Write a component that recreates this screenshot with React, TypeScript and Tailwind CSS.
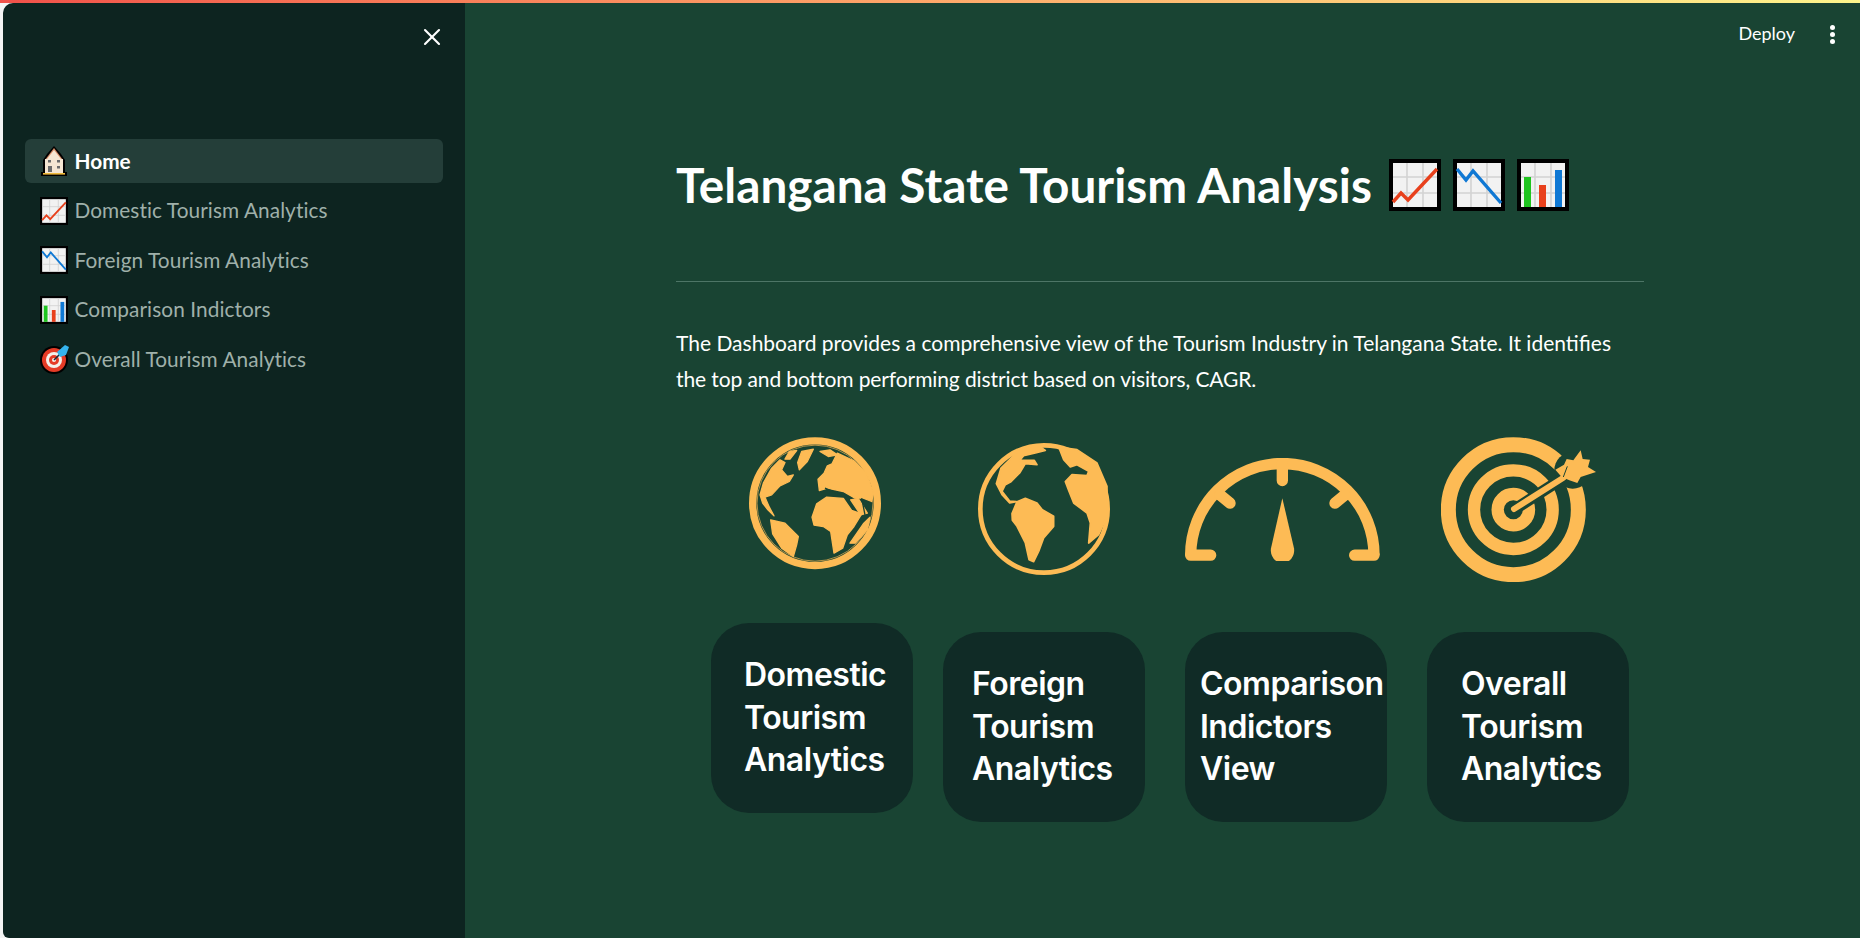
import { X } from 'lucide-react';

const GOLD = '#fdbb55';
const GREEN = '#194433';

function ChartBox({ kind, box }: { kind: 'up' | 'down' | 'bars'; box: string }) {
  return (
    <svg viewBox="0 0 52 52" className={box}>
      <rect width="52" height="52" fill="#000" />
      <rect x="4" y="4" width="44" height="44" fill="#f2f2f2" />
      <path d="M4 18H48M4 34H48M18 4V48M34 4V48" stroke="#d2d2d2" strokeWidth="1.6" fill="none" />
      {kind === 'up' && <path d="M4 43 L12 34 L19 41 L48 10" stroke="#e8401c" strokeWidth="3.4" fill="none" />}
      {kind === 'down' && <path d="M4 10 L13 21 L20 12 L48 44" stroke="#0f78d4" strokeWidth="3.4" fill="none" />}
      {kind === 'bars' && (
        <>
          <rect x="7" y="18" width="7" height="30" fill="#1fc41f" />
          <rect x="22" y="26" width="7" height="22" fill="#e8401c" />
          <rect x="38" y="11" width="7" height="37" fill="#0f78d4" />
        </>
      )}
    </svg>
  );
}

function HouseEmoji() {
  return (
    <svg viewBox="0 0 28 30" className="w-7 h-[30px] shrink-0">
      <path d="M14 0 L21 8 L25 14 V26 H27 V30 H1 V26 H3 V14 L7 8 Z" fill="#000" />
      <path d="M14 2 L23 14 H5 Z" fill="#d98f6a" />
      <rect x="5" y="13" width="18" height="14" fill="#f5e6d3" />
      <path d="M14 4 L21 13 H7 Z" fill="#f5e6d3" />
      <rect x="8" y="14" width="3" height="2.5" fill="#6b6b6b" />
      <rect x="17" y="14" width="3" height="2.5" fill="#6b6b6b" />
      <rect x="8" y="20" width="4" height="6" fill="#6b6b6b" />
      <rect x="17" y="20" width="3" height="2.5" fill="#6b6b6b" />
      <rect x="3" y="27" width="22" height="1.6" fill="#f0b93a" />
    </svg>
  );
}

function TargetEmoji() {
  return (
    <svg viewBox="0 0 30 30" className="w-[30px] h-[30px] shrink-0 -mr-[2px]">
      <circle cx="14" cy="16" r="14" fill="#000" />
      <circle cx="14" cy="16" r="12" fill="#e53b26" />
      <circle cx="14" cy="16" r="8" fill="#f4f0ea" />
      <circle cx="14" cy="16" r="5" fill="#e53b26" />
      <circle cx="14" cy="16" r="2" fill="#f4f0ea" />
      <path d="M14 16 L22 8" stroke="#1b2a3a" strokeWidth="1.6" />
      <path d="M17 8 L25 1 L29 3 L26 11 L20 13 Z" fill="#35b4ee" />
    </svg>
  );
}

function GlobeAtlantic() {
  return (
    <svg viewBox="57 52 396 398" className="w-[132px] h-[133px]">
      <circle cx="255" cy="250" r="187" fill="none" stroke={GOLD} strokeWidth="22" />
      <circle cx="255" cy="250" r="174" fill="none" stroke={GOLD} strokeWidth="2" />
      <g fill={GOLD} stroke={GOLD} strokeWidth="4" strokeLinejoin="round">
        <path d="M90 225 L100 190 L125 145 L150 120 L165 128 L155 150 L172 170 L190 165 L178 185 L150 198 L125 225 L105 232 L118 262 L132 288 L112 268 L98 250 Z" />
        <path d="M178 95 L200 92 L180 118 L165 118 Z" />
        <path d="M215 95 L250 88 L232 125 L208 150 L203 128 Z" />
        <path d="M122 300 L165 310 L205 350 L200 375 L190 410 L155 385 L128 342 Z" />
        <path d="M322 100 L370 122 L410 160 L430 220 L425 245 L400 235 L375 235 L340 215 L292 205 L268 212 L264 178 L282 160 L292 138 L306 132 Z" />
        <path d="M270 95 L300 90 L322 105 L295 110 Z" />
        <path d="M246 292 L260 252 L290 232 L340 236 L365 272 L395 282 L372 320 L352 345 L338 385 L312 400 L302 335 L280 320 L252 316 Z" />
        <path d="M360 370 L400 312 L420 292 L412 330 L376 370 Z" />
        <path d="M362 240 L385 236 L412 280 L392 285 Z" />
      </g>
      <path d="M395 235 L405 285 M285 205 L340 228" stroke={GREEN} strokeWidth="4" />
    </svg>
  );
}

function GlobeAmericas() {
  return (
    <svg viewBox="743 70 396 396" className="w-[132px] h-[132px]">
      <circle cx="941" cy="268" r="191" fill="none" stroke={GOLD} strokeWidth="14" />
      <g fill={GOLD} stroke={GOLD} strokeWidth="5" strokeLinejoin="round">
        <path d="M798 192 L812 145 L860 98 L925 78 L945 92 L915 100 L880 108 L868 122 L912 122 L920 135 L885 132 L868 160 L842 186 L825 195 L815 215 L838 244 L858 246 L838 250 L815 225 Z" />
        <path d="M985 82 L1040 90 L1100 130 L1130 200 L1130 290 L1105 345 L1075 370 L1080 310 L1070 280 L1030 250 L1015 212 L1005 186 L1025 165 L1070 168 L1075 155 L1040 135 L1020 142 L1000 120 Z" />
        <path d="M845 282 L860 246 L885 236 L920 250 L936 270 L970 290 L970 320 L940 355 L925 395 L910 426 L896 420 L885 370 L860 320 L846 302 Z" />
      </g>
    </svg>
  );
}

function Gauge() {
  return (
    <svg viewBox="75 115 585 308" className="w-[195px] h-[103px]">
      <g fill="none" stroke={GOLD} strokeWidth="34" strokeLinecap="round">
        <path d="M92 406 A275 275 0 0 1 642 406" strokeLinecap="butt" />
        <path d="M92 406 H152 M642 406 H584 M367 132 V182 M180 225 L210 250 M555 225 L525 250" />
      </g>
      <path d="M367 235 L333 385 A35 38 0 1 0 402 385 Z" fill={GOLD} />
    </svg>
  );
}

function Target() {
  return (
    <svg viewBox="843 52 465 435" className="w-[155px] h-[145px]">
      <g fill="none" stroke={GOLD}>
        <circle cx="1060" cy="270" r="195" strokeWidth="45" />
        <circle cx="1060" cy="270" r="118" strokeWidth="37" />
        <circle cx="1060" cy="270" r="47" strokeWidth="37" />
      </g>
      <circle cx="1238" cy="152" r="55" fill={GREEN} />
      <path d="M1065 268 L1205 178" stroke={GREEN} strokeWidth="34" />
      <path d="M1062 268 L1210 174" stroke={GOLD} strokeWidth="18" strokeLinecap="round" />
      <path
        d="M1186 150 L1212 135 L1220 118 L1240 122 L1262 92 L1268 118 L1290 120 L1284 142 L1308 157 L1262 172 L1252 190 L1228 182 L1205 172 Z"
        fill={GOLD}
      />
      <path d="M1210 172 L1222 140" stroke={GREEN} strokeWidth="3" />
    </svg>
  );
}

const NAV = [
  { label: 'Domestic Tourism Analytics', icon: <ChartBox kind="up" box="w-7 h-7 shrink-0" /> },
  { label: 'Foreign Tourism Analytics', icon: <ChartBox kind="down" box="w-7 h-7 shrink-0" /> },
  { label: 'Comparison Indictors', icon: <ChartBox kind="bars" box="w-7 h-7 shrink-0" /> },
  { label: 'Overall Tourism Analytics', icon: <TargetEmoji /> },
];

function AnalyticsCard({ lines, className }: { lines: string[]; className: string }) {
  return (
    <div className={`w-[202px] h-[190px] shrink-0 rounded-[38px] bg-[#102b26] flex flex-col justify-center text-[32px] leading-[42.5px] font-semibold text-white font-['Inter',sans-serif] tracking-[-0.5px] ${className}`}>
      {lines.map(line => (
        <div key={line} className="whitespace-nowrap">{line}</div>
      ))}
    </div>
  );
}

export default function App() {
  return (
    <div className="w-[1860px] h-[938px] overflow-hidden bg-[#f4f4f4] pl-[3px] font-['Lato',sans-serif] relative">
      <div className="absolute top-0 left-0 right-0 h-[3px] bg-gradient-to-r from-[#f0514a] to-[#fdf58c]" />
      <div className="flex h-full pt-[3px]">
        <aside className="w-[462px] shrink-0 bg-[#0d2420] rounded-tl-[10px] rounded-bl-[6px] pt-[20px] pl-[22px] pr-[22px]">
          <div className="flex justify-end -mr-[3px] h-[116px]">
            <X className="w-7 h-7 text-white" strokeWidth={1.8} />
          </div>
          <nav className="flex flex-col gap-[5.5px]">
            <div className="h-[44px] rounded-[6px] bg-[#243e39] flex items-center pl-[15px] gap-[6.5px] text-[20.8px] font-bold text-white">
              <HouseEmoji />
              <span>Home</span>
            </div>
            {NAV.map(item => (
              <div key={item.label} className="h-[44px] flex items-center pl-[15px] gap-[6.5px] text-[20.8px] tracking-[0.08px] text-[#9fb0aa]">
                {item.icon}
                <span className="-mt-[1px]">{item.label}</span>
              </div>
            ))}
          </nav>
        </aside>
        <main className="flex-1 bg-[#194433] text-white flex flex-col">
          <header className="h-[60px] flex items-center justify-end pr-[25px] gap-[35px]">
            <span className="text-[18px]">Deploy</span>
            <span className="flex flex-col gap-[2px] mt-[2px]">
              <i className="block w-[5px] h-[5px] rounded-full bg-white" />
              <i className="block w-[5px] h-[5px] rounded-full bg-white" />
              <i className="block w-[5px] h-[5px] rounded-full bg-white" />
            </span>
          </header>
          <div className="pl-[211px] w-[1179px]">
            <h1 className="mt-[96px] h-[52px] flex items-center gap-[12px] text-[47.7px] font-bold whitespace-nowrap">
              <span className="mr-[5px]">Telangana State Tourism Analysis</span>
              <ChartBox kind="up" box="w-[52px] h-[52px]" />
              <ChartBox kind="down" box="w-[52px] h-[52px]" />
              <ChartBox kind="bars" box="w-[52px] h-[52px]" />
            </h1>
            <hr className="mt-[70px] border-0 h-px bg-[#4d7566]" />
            <p className="mt-[43px] text-[21px] leading-[36px]">
              The Dashboard provides a comprehensive view of the Tourism Industry in Telangana State. It identifies<br />
              <span className="tracking-[-0.1px]">the top and bottom performing district based on visitors, CAGR.</span>
            </p>
          </div>
          <div className="pl-[211px] mt-[40px]">
            <div className="h-[145px] flex items-start">
              <div className="ml-[73px]"><GlobeAtlantic /></div>
              <div className="ml-[97px] mt-[6px]"><GlobeAmericas /></div>
              <div className="ml-[75px] mt-[21px]"><Gauge /></div>
              <div className="ml-[61px]"><Target /></div>
            </div>
            <div className="mt-[41px] flex items-start">
              <AnalyticsCard lines={['Domestic', 'Tourism', 'Analytics']} className="ml-[35px] pl-[33px]" />
              <AnalyticsCard lines={['Foreign', 'Tourism', 'Analytics']} className="ml-[30px] mt-[9px] pl-[29px]" />
              <AnalyticsCard lines={['Comparison', 'Indictors', 'View']} className="ml-[40px] mt-[9px] pl-[15px]" />
              <AnalyticsCard lines={['Overall', 'Tourism', 'Analytics']} className="ml-[40px] mt-[9px] pl-[34px]" />
            </div>
          </div>
        </main>
      </div>
    </div>
  );
}
